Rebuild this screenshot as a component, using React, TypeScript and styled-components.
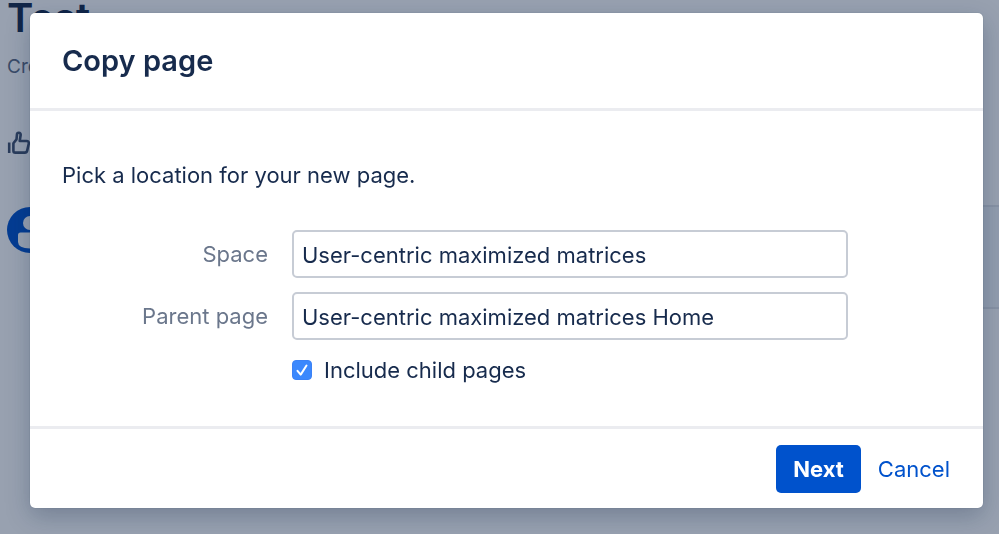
import React from "react";
import styled, { createGlobalStyle } from "styled-components";

const GlobalStyle = createGlobalStyle`
  *, *::before, *::after { box-sizing: border-box; }
  html, body, #root { height: 100%; }
  body {
    margin: 0;
    overflow: hidden;
    background: #ffffff;
    color: #172b4d;
    font-family: Inter, "Liberation Sans", sans-serif;
    font-size: 22px;
    line-height: 28px;
  }
  h1, h2, p { margin: 0; }
  button, input { font: inherit; color: inherit; }
`;

const Page = styled.main`
  padding-left: 7px;
`;

const PageTitle = styled.h1`
  margin-top: -9px;
  font-size: 40px;
  line-height: 54px;
  font-weight: 600;
`;

const Byline = styled.p`
  margin-top: 8px;
  font-size: 19px;
  color: #5e6c84;
`;

const LikeButton = styled.button`
  display: flex;
  align-items: center;
  gap: 8px;
  margin-top: 50px;
  padding: 0;
  border: 0;
  background: none;
  color: #42526e;
`;

const CommentRow = styled.section`
  display: flex;
  gap: 24px;
  margin-top: 50px;
`;

const Avatar = styled.svg`
  flex: none;
  margin-top: 2px;
`;

const CommentBox = styled.div`
  flex: 1;
  height: 104px;
  border: solid #e3e6eb;
  border-width: 2px 0 2px 2px;
  background: #f4f8fb;
`;

const Blanket = styled.div`
  position: fixed;
  inset: 0;
  padding: 13px 16px 0 30px;
  background: rgba(9, 30, 66, 0.42);
`;

const Dialog = styled.form`
  border-radius: 5px;
  background: #ffffff;
  box-shadow: 0 0 1px rgba(9, 30, 66, 0.4), 0 8px 24px rgba(9, 30, 66, 0.26);
`;

const DialogHeader = styled.header`
  padding: 30px 32px;
  border-bottom: 3px solid #ebecf0;
`;

const DialogTitle = styled.h2`
  font-size: 29px;
  line-height: 35px;
  font-weight: 600;
`;

const DialogBody = styled.div`
  padding: 50px 32px 42px;
`;

const FieldGrid = styled.div`
  display: grid;
  grid-template-columns: 206px minmax(0, 556px);
  gap: 14px 24px;
  align-items: center;
  margin-top: 41px;
`;

const FieldLabel = styled.label`
  text-align: right;
  color: #6b778c;
`;

const TextField = styled.input`
  width: 100%;
  height: 48px;
  padding: 2px 8px 0;
  border: 2px solid #c7ccd5;
  border-radius: 5px;
  background: #ffffff;
  outline: none;
`;

const CheckLabel = styled.label`
  grid-column: 2;
  display: flex;
  align-items: center;
  gap: 12px;
  margin-top: 2px;
`;

const CheckControl = styled.span`
  display: grid;
  width: 20px;
  height: 20px;

  & > * {
    grid-area: 1 / 1;
  }
`;

const CheckInput = styled.input`
  appearance: none;
  width: 20px;
  height: 20px;
  margin: 0;
  border-radius: 4px;
  border: 1px solid #3b82f6;
  background: #ffffff;

  &:checked {
    background: #3b88fd;
  }

  & + svg {
    pointer-events: none;
    visibility: hidden;
  }

  &:checked + svg {
    visibility: visible;
  }
`;

const DialogFooter = styled.footer`
  display: flex;
  justify-content: flex-end;
  padding: 16px 33px 15px 32px;
  gap: 17px;
  border-top: 3px solid #ebecf0;
`;

const ActionButton = styled.button<{ $primary?: boolean }>`
  height: 48px;
  padding: 0 ${(p) => (p.$primary ? "17px" : "0")};
  border: 0;
  border-radius: 5px;
  background: ${(p) => (p.$primary ? "#0052cc" : "none")};
  color: ${(p) => (p.$primary ? "#ffffff" : "#0052cc")};
  font-weight: ${(p) => (p.$primary ? 700 : 400)};
  cursor: pointer;
`;

const ThumbIcon = () => (
  <svg width="24" height="24" viewBox="0 0 24 24" fill="none" stroke="currentColor" strokeWidth="2.6" strokeLinejoin="round" strokeLinecap="round" aria-hidden="true">
    <path d="M2.2 11.5V22" strokeLinecap="butt" />
    <path d="M6.4 12.2 9.5 8.4 10 3.2C10.2 1.2 13.6 1.1 13.7 3.8L12.7 10H19.6C21.2 10 22.1 11.2 21.8 12.6L20.2 19.6C19.9 21 19.1 21.6 17.8 21.6H8.4C7.2 21.6 6.4 20.9 6.4 19.7Z" />
  </svg>
);

export default function App() {
  return (
    <>
      <GlobalStyle />
      <Page>
        <PageTitle>Test</PageTitle>
        <Byline>Created</Byline>
        <LikeButton type="button" aria-label="Like">
          <ThumbIcon />
        </LikeButton>
        <CommentRow>
          <Avatar width="46" height="46" viewBox="0 0 46 46" aria-hidden="true">
            <circle cx="23" cy="23" r="23" fill="#0052cc" />
            <circle cx="23" cy="16" r="7" fill="#ffffff" />
            <path d="M11 28Q11 25.500 13.500 25.500H32.500Q35 25.500 35 28V35Q35 41 23 41.500Q11 41 11 35Z" fill="#ffffff" />
          </Avatar>
          <CommentBox />
        </CommentRow>
      </Page>
      <Blanket>
        <Dialog role="dialog" aria-modal="true" aria-labelledby="dialog-title" onSubmit={(e) => e.preventDefault()}>
          <DialogHeader>
            <DialogTitle id="dialog-title">Copy page</DialogTitle>
          </DialogHeader>
          <DialogBody>
            <p>Pick a location for your new page.</p>
            <FieldGrid>
              <FieldLabel htmlFor="space">Space</FieldLabel>
              <TextField id="space" type="text" defaultValue="User-centric maximized matrices" />
              <FieldLabel htmlFor="parent">Parent page</FieldLabel>
              <TextField id="parent" type="text" defaultValue="User-centric maximized matrices Home" />
              <CheckLabel htmlFor="children">
                <CheckControl>
                  <CheckInput id="children" type="checkbox" defaultChecked />
                  <svg width="20" height="20" viewBox="0 0 20 20" fill="none" stroke="#ffffff" strokeWidth="2" strokeLinecap="round" strokeLinejoin="round" aria-hidden="true">
                    <path d="M5.500 10.800 8.700 14.600 14.500 5.500" />
                  </svg>
                </CheckControl>
                Include child pages
              </CheckLabel>
            </FieldGrid>
          </DialogBody>
          <DialogFooter>
            <ActionButton type="submit" $primary>Next</ActionButton>
            <ActionButton type="button">Cancel</ActionButton>
          </DialogFooter>
        </Dialog>
      </Blanket>
    </>
  );
}
